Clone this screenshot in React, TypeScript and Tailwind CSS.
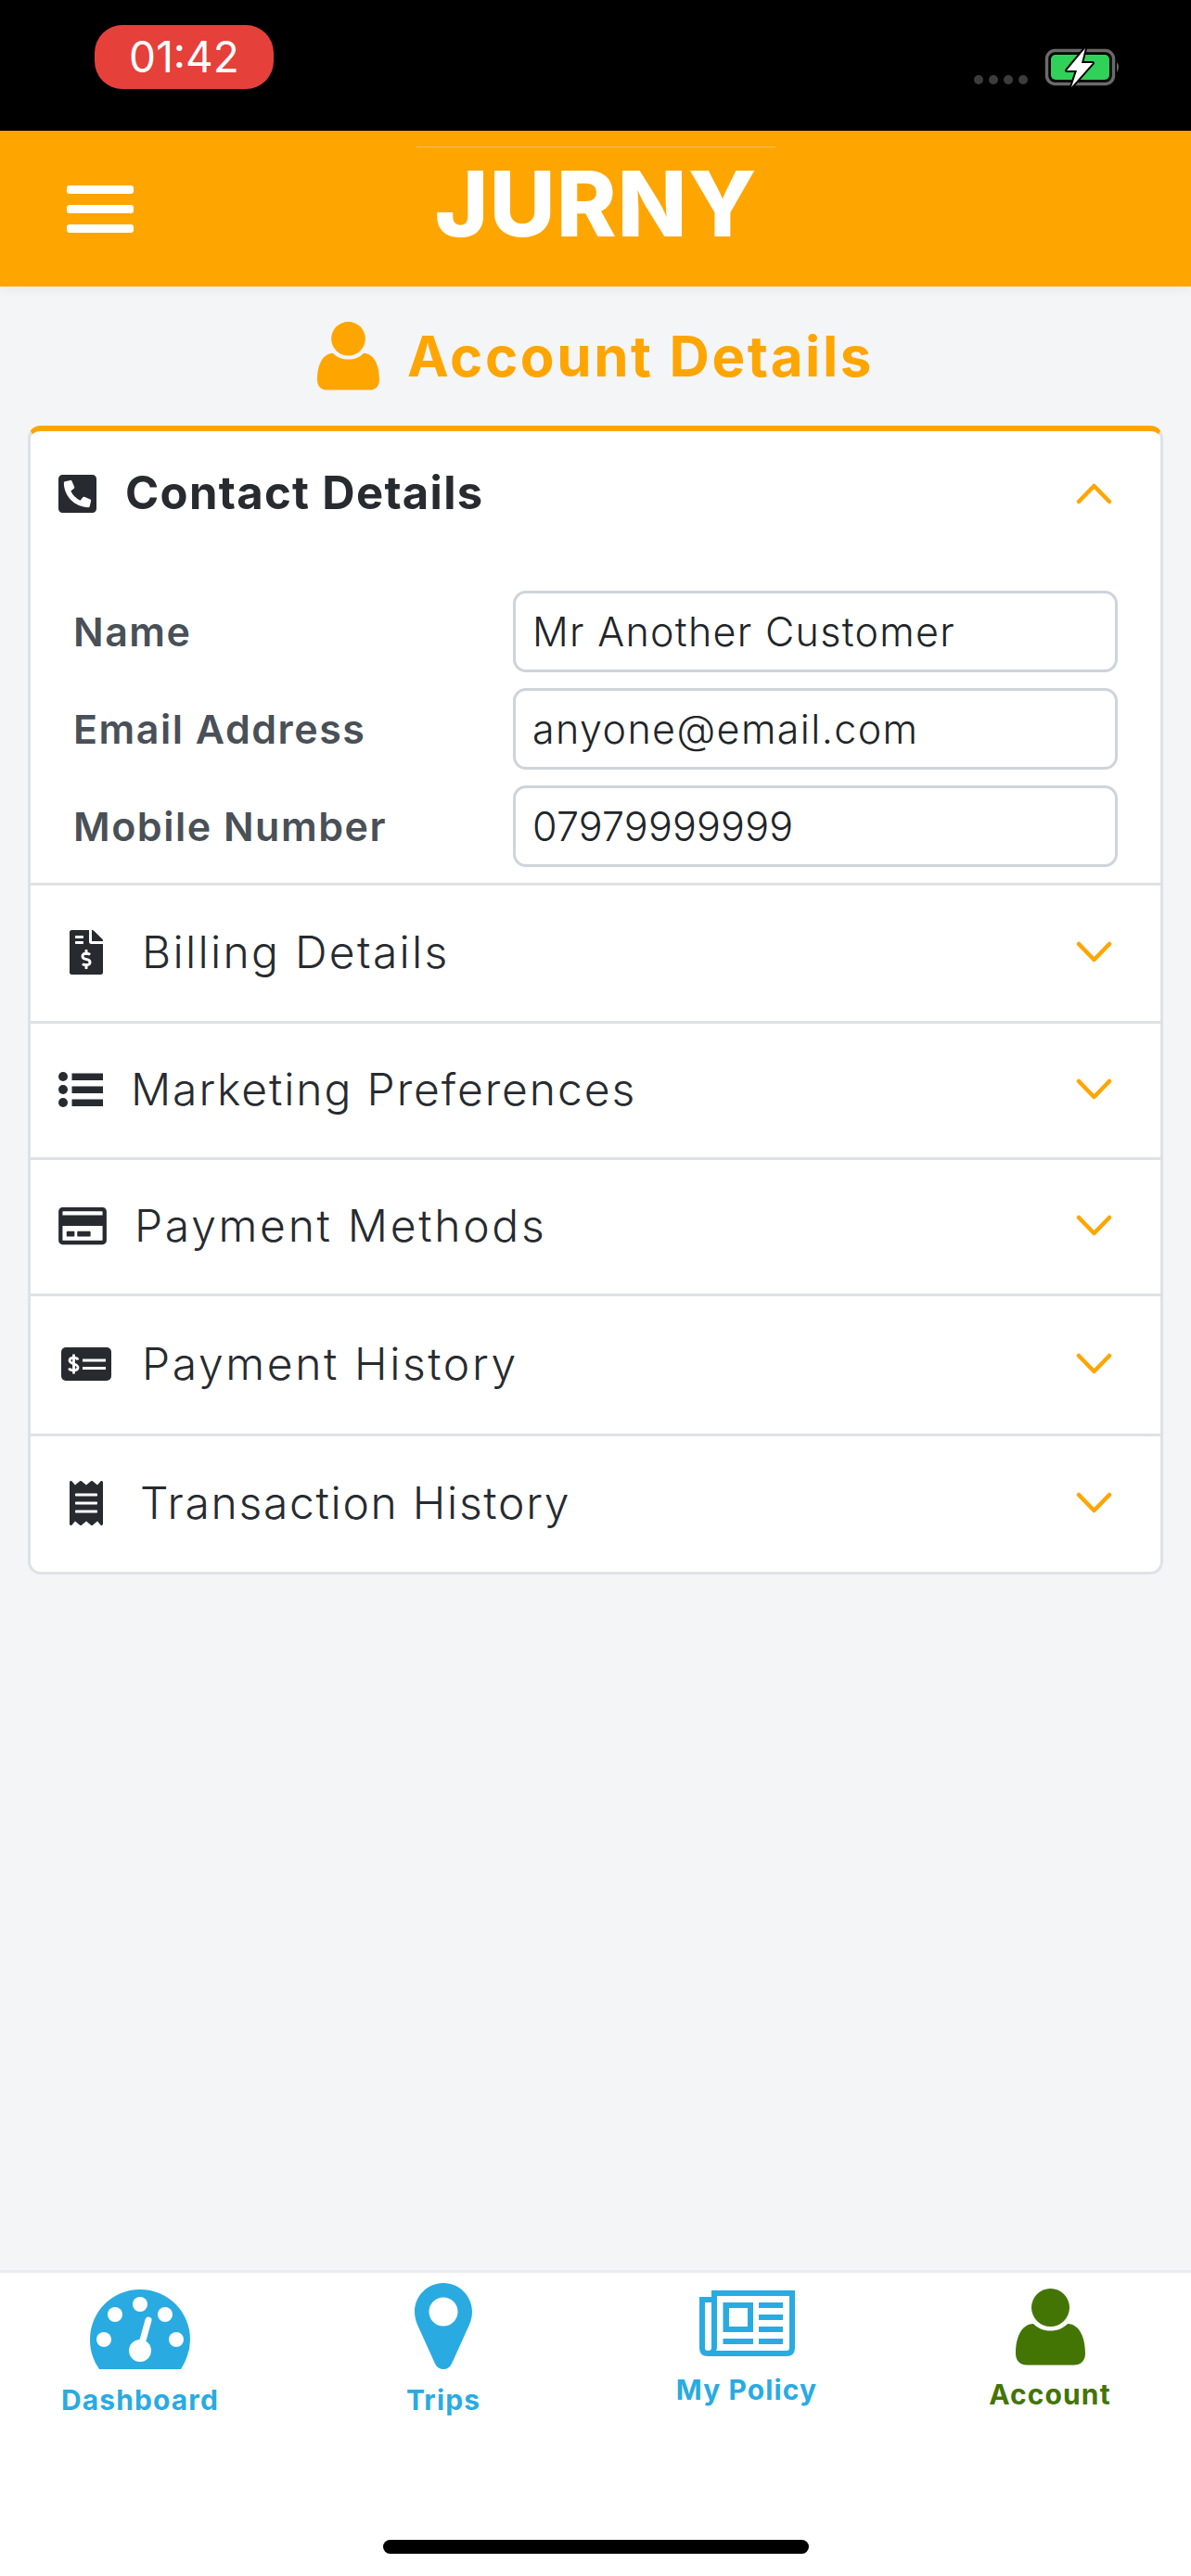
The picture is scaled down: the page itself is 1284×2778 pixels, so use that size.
import React from "react";
import { FaFileInvoiceDollar, FaRegCreditCard, FaReceipt, FaPhoneSquareAlt } from "react-icons/fa";

const font = { fontFamily: "Inter, 'Open Sans', sans-serif" };

function Person({ className }: { className: string }) {
  return (
    <svg viewBox="0 0 75 83" className={className} preserveAspectRatio="none" fill="currentColor">
      <ellipse cx="37.5" cy="20.5" rx="20.5" ry="20.5" />
      <path d="M19 38C24 43 30 45.500 37.500 45.500C45 45.500 51 43 56 38C67 38 75 50 75 70C75 78 70 82.500 63 82.500L12 82.500C5 82.500 0 78 0 70C0 50 8 38 19 38Z" />
    </svg>
  );
}

function Chevron({ up }: { up?: boolean }) {
  return (
    <svg viewBox="0 0 39 25" className="ml-auto mr-[52px] h-[25px] w-[39px] shrink-0 text-[#ffa500]" fill="none" stroke="currentColor" strokeWidth="4.500" strokeLinecap="round" strokeLinejoin="round">
      <path d={up ? "M3 21L19.500 4L36 21" : "M3 4L19.500 21L36 4"} />
    </svg>
  );
}

function ListIcon() {
  return (
    <svg viewBox="0 0 48 38" className="ml-[30px] h-[38px] w-[48px] shrink-0" fill="currentColor">
      <circle cx="5" cy="5" r="5" />
      <circle cx="5" cy="19" r="5" />
      <circle cx="5" cy="33" r="5" />
      <rect x="14.500" y="1.500" width="33.500" height="7.500" />
      <rect x="14.500" y="15.500" width="33.500" height="7.500" />
      <rect x="14.500" y="29.500" width="33.500" height="7.500" />
    </svg>
  );
}

function MoneyIcon() {
  return (
    <svg viewBox="0 0 54 36" className="ml-[33px] h-[36px] w-[54px] shrink-0">
      <rect width="54" height="36" rx="5" fill="currentColor" />
      <path d="M23 14H48M23 22.500H48" stroke="#fff" strokeWidth="2.800" />
      <path d="M18 13.500C17 10.500 9.500 10 9 14C8.500 18.500 18.500 17 18 22C17.500 26 9.500 25.500 8.500 22.500M13.500 7.500V28.500" fill="none" stroke="#fff" strokeWidth="2.800" />
    </svg>
  );
}

const rows = [
  { label: "Billing Details", h: "h-[149px]", text: "ml-[42px] tracking-[2.300px]", icon: <FaFileInvoiceDollar className="ml-[42px] h-[48px] w-[36px] shrink-0" /> },
  { label: "Marketing Preferences", h: "h-[147px]", text: "ml-[30px] tracking-[1.900px]", icon: <ListIcon /> },
  { label: "Payment Methods", h: "h-[147px]", text: "ml-[30px] tracking-[2.700px]", icon: <FaRegCreditCard className="ml-[30px] h-[46px] w-[52px] shrink-0" /> },
  { label: "Payment History", h: "h-[151px]", text: "ml-[33px] tracking-[2.600px]", icon: <MoneyIcon /> },
  { label: "Transaction History", h: "h-[149px]", text: "ml-[40px] tracking-[1.700px]", icon: <FaReceipt className="ml-[42px] h-[48px] w-[36px] shrink-0" /> },
];

const fields = [
  { label: "Name", value: "Mr Another Customer", track: "tracking-[1.300px]" },
  { label: "Email Address", value: "anyone@email.com", track: "tracking-[1.400px]" },
  { label: "Mobile Number", value: "07979999999", track: "tracking-[0.200px]" },
];

export default function App() {
  return (
    <div className="flex h-[2778px] w-[1284px] flex-col overflow-hidden bg-[#f4f5f7] text-[#212529]" style={font}>
      <div className="flex h-[141px] shrink-0 items-start bg-black">
        <div className="ml-[102px] mt-[27px] flex h-[69px] w-[193px] items-center justify-center rounded-[30px] bg-[#e6403a] text-[46px] text-white">
          01:42
        </div>
        <svg viewBox="0 0 170 50" className="ml-auto mr-[74px] mt-[48px] h-[50px] w-[170px]">
          <g fill="#3c3c3c">
            <circle cx="15" cy="38" r="5" />
            <circle cx="31" cy="38" r="5" />
            <circle cx="47" cy="38" r="5" />
            <circle cx="63" cy="38" r="5" />
          </g>
          <rect x="88.500" y="6.500" width="72" height="36" rx="9" fill="none" stroke="#6a6a6a" strokeWidth="3.500" />
          <rect x="93" y="11" width="63" height="27" rx="5" fill="#30d158" />
          <path d="M164 19q4 5 0 11z" fill="#6a6a6a" />
          <path d="M130 4L110 28H121L115 46L138 20H126Z" fill="#fff" stroke="#000" strokeWidth="4" strokeLinejoin="round" paintOrder="stroke" />
        </svg>
      </div>

      <header className="relative z-10 flex h-[168px] shrink-0 items-start bg-[#ffa500] shadow-[0_4px_10px_rgba(0,0,0,0.05)]">
        <div className="ml-[72px] mt-[59px] flex w-[72px] flex-col gap-[12px]">
          <div className="h-[9px] rounded-[3px] bg-white" />
          <div className="h-[9px] rounded-[3px] bg-white" />
          <div className="h-[9px] rounded-[3px] bg-white" />
        </div>
        <div className="ml-[305px] mt-[17px] flex w-[387px] flex-col items-center">
          <div className="h-px w-full bg-[#ffbf66]" />
          <div className="mt-[6px] text-[98px] font-extrabold leading-[110px] tracking-[1px] text-white">JURNY</div>
        </div>
      </header>

      <main className="flex-1">
        <div className="flex h-[150px] items-center justify-center gap-[30px] text-[#ffa500]">
          <Person className="h-[74px] w-[67px]" />
          <h1 className="text-[60px] font-bold tracking-[2.600px]">Account Details</h1>
        </div>

        <div className="mx-[30px] overflow-hidden rounded-[14px] border-[3px] border-t-[6px] border-[#dee2e6] border-t-[#ffa500] bg-white">
          <div className="flex h-[134px] items-center">
            <FaPhoneSquareAlt className="ml-[30px] h-[47px] w-[41px] shrink-0 text-[#272b30]" />
            <span className="ml-[31px] text-[49px] font-bold tracking-[1.300px] text-[#272b30]">Contact Details</span>
            <Chevron up />
          </div>
          <div className="flex flex-col gap-[17px] pb-[17px] pt-[38px]">
            {fields.map((f) => (
              <div key={f.label} className="flex items-center">
                <span className="ml-[46px] w-[474px] shrink-0 text-[43px] font-semibold tracking-[1.500px] text-[#495057]">{f.label}</span>
                <div className={`flex h-[88px] w-[652px] items-center rounded-[14px] border-[3px] border-[#ced4da] pl-[18px] text-[43px] font-light text-[#212529] ${f.track}`}>
                  {f.value}
                </div>
              </div>
            ))}
          </div>
          {rows.map((r) => (
            <div key={r.label} className={`flex items-center border-t-[3px] border-[#dee2e6] pb-[3px] text-[#272b30] ${r.h}`}>
              {r.icon}
              <span className={`text-[48px] font-light ${r.text}`}>{r.label}</span>
              <Chevron />
            </div>
          ))}
        </div>
      </main>

      <nav className="flex h-[330px] shrink-0 justify-between border-t-[3px] border-[#e9ecef] bg-white pl-[51px] pr-[52px] text-[30px] font-bold tracking-[1.100px] text-[#29abe2]">
        <div className="flex w-[200px] flex-col items-center pt-[18px]">
          <svg viewBox="0 0 108 86" className="h-[86px] w-[108px]" fill="currentColor">
            <path fillRule="evenodd" d="M10 86H98Q108 70 108 54C108 24 84 0 54 0C24 0 0 24 0 54Q0 72 10 86Z" />
            <g fill="#fff">
              <circle cx="54" cy="16" r="8" />
              <circle cx="27" cy="27" r="8" />
              <circle cx="81" cy="27" r="8" />
              <circle cx="15" cy="54" r="8" />
              <circle cx="93" cy="54" r="8" />
              <circle cx="54" cy="66" r="12" />
            </g>
            <path d="M55 62L63 33" stroke="#fff" strokeWidth="7" strokeLinecap="round" />
          </svg>
          <span className="mt-[15px] leading-[36px]">Dashboard</span>
        </div>
        <div className="flex w-[200px] flex-col items-center pt-[11px]">
          <svg viewBox="0 0 62 93" className="h-[93px] w-[62px]" fill="currentColor">
            <path fillRule="evenodd" d="M31 0C48 0 62 14 62 31C62 36 61 40 59 45L40 87C38 91 35 93 31 93C27 93 24 91 22 87L3 45C1 40 0 36 0 31C0 14 14 0 31 0ZM31 15.500A15.500 15.500 0 1 0 31 46.500A15.500 15.500 0 1 0 31 15.500Z" />
          </svg>
          <span className="mt-[15px] leading-[36px]">Trips</span>
        </div>
        <div className="flex w-[200px] flex-col items-center pt-[19px]">
          <svg viewBox="0 0 103 71" className="h-[71px] w-[103px]" fill="currentColor">
            <path fillRule="evenodd" d="M13 0H103V62Q103 71 94 71H9Q0 71 0 62V7H13ZM19 6V62Q19 63 18 65H94Q97 65 97 62V6ZM6 13V62Q6 65 9 65Q13 65 13 62V13Z" />
            <path fillRule="evenodd" d="M25.500 13H58V45H25.500ZM32 19V39H52V19Z" />
            <rect x="64" y="13" width="26" height="6" />
            <rect x="64" y="26" width="26" height="6" />
            <rect x="64" y="39" width="26" height="6" />
            <rect x="64" y="52" width="26" height="6" />
            <rect x="25.500" y="52" width="32.500" height="6" />
          </svg>
          <span className="mt-[18px] leading-[36px]">My Policy</span>
        </div>
        <div className="flex w-[200px] flex-col items-center pt-[17px] text-[#437505]">
          <Person className="h-[83px] w-[75px]" />
          <span className="mt-[13px] leading-[36px]">Account</span>
        </div>
      </nav>

      <div className="fixed left-[413px] top-[2739px] h-[15px] w-[459px] rounded-full bg-black" />
    </div>
  );
}
